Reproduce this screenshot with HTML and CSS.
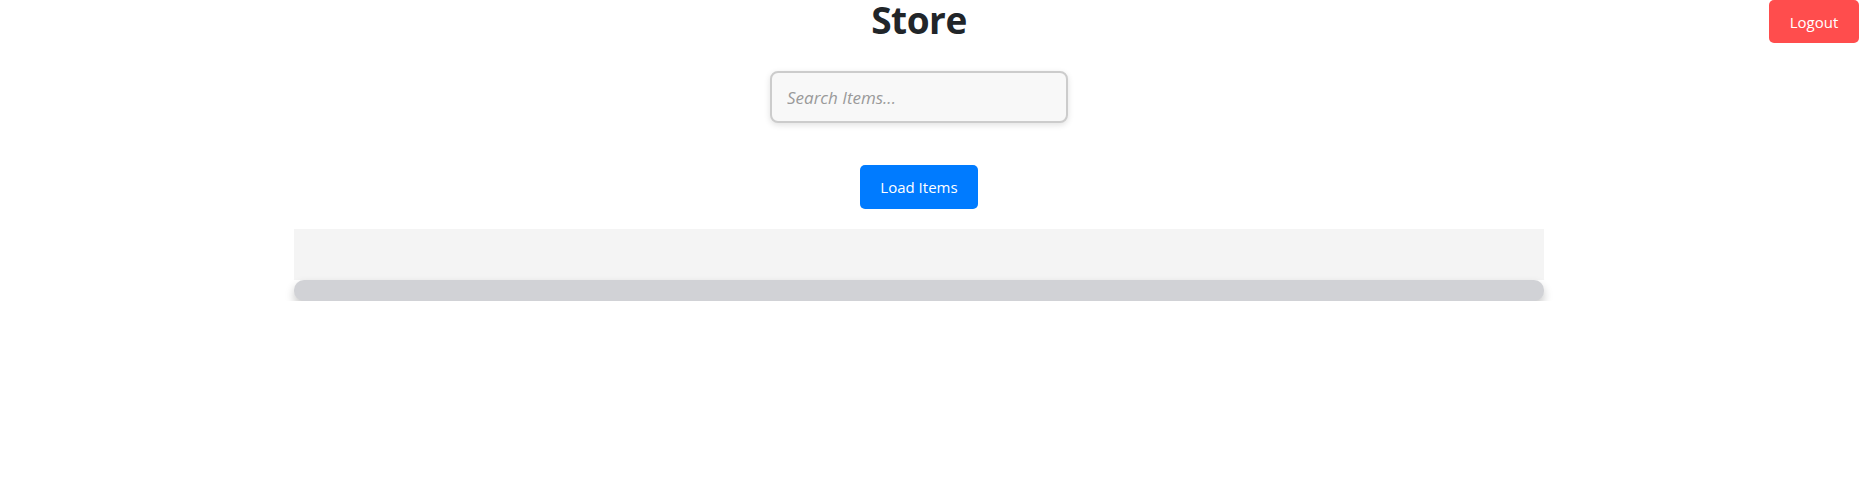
FILE: index.html
```html
<!DOCTYPE html>
<html>
<head>
<meta charset="utf-8">
<link rel="stylesheet" href="styles.css">
</head>
<body>
<button class="logout">Logout</button>
<div class="page">
  <h1 class="title">Store</h1>
  <input class="search" type="text" placeholder="Search Items...">
  <button class="load">Load Items</button>
  <div class="list">
    <div class="list-body"></div>
    <div class="list-bar"></div>
  </div>
</div>
</body>
</html>
```
FILE: styles.css
```css
html, body {
  margin: 0;
  padding: 0;
  background: #fff;
  font-family: "Open Sans", "Noto Sans", sans-serif;
}
.page {
  width: 1838px;
  display: flex;
  flex-direction: column;
  align-items: center;
}
.title {
  margin: 0;
  font-size: 37px;
  font-weight: 700;
  line-height: 40px;
  color: #212529;
  letter-spacing: -0.5px;
}
.search {
  box-sizing: border-box;
  margin-top: 31px;
  width: 298px;
  height: 52px;
  border: 2px solid #cccccc;
  border-radius: 8px;
  background: #f8f8f8;
  box-shadow: 0 2px 6px rgba(0, 0, 0, 0.12);
  padding: 0 15px;
  font-family: "Open Sans", sans-serif;
  font-size: 17px;
  outline: none;
}
.search::placeholder {
  color: #9a9a9a;
  font-style: italic;
}
.load {
  box-sizing: border-box;
  margin-top: 42px;
  width: 118px;
  height: 44px;
  border: none;
  border-radius: 5px;
  background: #007bff;
  color: #fff;
  font-family: "Open Sans", sans-serif;
  font-size: 15px;
}
.list {
  margin-top: 20px;
  width: 1250px;
  display: flex;
  flex-direction: column;
}
.list-body {
  height: 51px;
  background: #f4f4f4;
}
.list-bar {
  height: 21px;
  border-radius: 10px;
  background: #d1d2d6;
  box-shadow: 0 5px 10px rgba(0, 0, 0, 0.22);
}
.logout {
  position: absolute;
  top: 0;
  right: 9px;
  box-sizing: border-box;
  width: 90px;
  height: 43px;
  border: none;
  border-radius: 5px;
  background: #ff4d4d;
  color: #fff;
  font-family: "Open Sans", sans-serif;
  font-size: 15px;
}
```
